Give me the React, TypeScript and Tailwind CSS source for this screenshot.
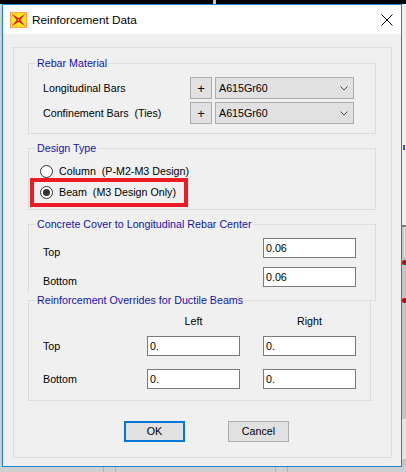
import type { ReactNode } from "react";

function Group({
  title,
  className,
  children,
}: {
  title: string;
  className: string;
  children: ReactNode;
}) {
  return (
    <div className={`relative border border-[#dcdcdc] ${className}`}>
      <span className="absolute -top-[7px] left-[6px] px-[2px] bg-[#f0f0f0] text-[#1414a6] leading-[13px] whitespace-nowrap">
        {title}
      </span>
      {children}
    </div>
  );
}

function Field({ value }: { value: string }) {
  return (
    <input
      readOnly
      value={value}
      className="w-[93px] h-[20px] border border-[#7a7a7a] bg-white px-[2px] text-[10.7px] leading-[13px] text-black outline-none"
    />
  );
}

function MaterialRow({ label }: { label: string }) {
  return (
    <div className="flex items-center h-[22px]">
      <span className="w-[147px] whitespace-pre">{label}</span>
      <button className="w-[22px] h-[22px] border border-[#adadad] bg-[#e1e1e1] flex items-center justify-center text-[13px] leading-none">
        +
      </button>
      <div className="ml-[3px] w-[139px] h-[22px] border border-[#adadad] bg-[#e1e1e1] flex items-center justify-between pl-[3px] pr-[5px]">
        <span>A615Gr60</span>
        <svg width="8" height="5" viewBox="0 0 8 5">
          <path d="M0.5 0.5 L4 4 L7.5 0.5" stroke="#4a4a4a" fill="none" />
        </svg>
      </div>
    </div>
  );
}

function Radio({ label, checked }: { label: string; checked?: boolean }) {
  return (
    <div className="flex items-center h-[21px] gap-[6px]">
      <span className="w-[13px] h-[13px] rounded-full border border-[#333] bg-white flex items-center justify-center">
        {checked && <span className="w-[7px] h-[7px] rounded-full bg-[#333]" />}
      </span>
      <span className="whitespace-pre">{label}</span>
    </div>
  );
}

function AppIcon() {
  return (
    <svg width="17" height="16" viewBox="0 0 17 16">
      <rect x="0.5" y="0.5" width="16" height="15" fill="#ffe81a" stroke="#ff4a1f" strokeDasharray="1 1" />
      <path d="M1.5 1.5 L8.5 6.3 L15.5 1.5 L10.3 8 L15.5 14.5 L8.5 9.7 L1.5 14.5 L6.7 8 Z" fill="#e8141c" />
      <path d="M8.5 6.8 L9.7 8 L8.5 9.2 L7.3 8 Z" fill="#ff9a1a" />
    </svg>
  );
}

export default function App() {
  return (
    <div className="relative w-[406px] h-[472px] overflow-hidden bg-[#d2d2d2] font-['Liberation_Sans',Arial,sans-serif] text-[10.7px] leading-[13px] text-black">
      {/* desktop strip above */}
      <div className="relative h-[4px] bg-black">
        <span className="absolute left-[213px] top-0 w-[3px] h-[4px] bg-[#c8c8c8]" />
      </div>

      <div className="flex">
        <div className="w-[2px] h-[463px] bg-[#ececec]" />

        {/* window */}
        <div className="w-[400px] h-[463px] border border-[#1883d7] bg-[#f0f0f0] flex flex-col shadow-[0_2px_6px_rgba(0,0,0,0.35)]">
          <div className="h-[29px] bg-white flex items-center pl-[7px] pr-[8px]">
            <AppIcon />
            <span className="ml-[5px] text-[11.8px] leading-[14px]">Reinforcement Data</span>
            <svg className="ml-auto" width="12" height="12" viewBox="0 0 12 12">
              <path d="M0.5 0.5 L11.5 11.5 M11.5 0.5 L0.5 11.5" stroke="#000" strokeWidth="1" />
            </svg>
          </div>

          <div className="pl-[10px] pt-[13px]">
            <div className="w-[379px] h-[411px] border border-[#dcdcdc] pl-[14px]">
              <Group title="Rebar Material" className="w-[348px] h-[71px] mt-[15px] pt-[13px] pl-[14px]">
                <div className="flex flex-col gap-[3px]">
                  <MaterialRow label="Longitudinal Bars" />
                  <MaterialRow label="Confinement Bars  (Ties)" />
                </div>
              </Group>

              <Group title="Design Type" className="w-[348px] h-[62px] mt-[14px] pt-[12px] pl-[11px]">
                <Radio label="Column  (P-M2-M3 Design)" />
                <Radio label="Beam  (M3 Design Only)" checked />
                <div className="absolute left-[1px] top-[29px] w-[158px] h-[29px] border-[4px] border-[#ed1c24]" />
              </Group>

              <Group title="Concrete Cover to Longitudinal Rebar Center" className="w-[348px] h-[77px] mt-[14px] pt-[13px] pl-[14px]">
                <div className="flex items-center h-[20px]">
                  <span className="w-[220px] pt-[9px]">Top</span>
                  <Field value="0.06" />
                </div>
                <div className="flex items-center h-[20px] mt-[9px]">
                  <span className="w-[220px] pt-[9px]">Bottom</span>
                  <Field value="0.06" />
                </div>
              </Group>

              <div className="relative z-10 w-[343px] h-[101px] -mt-[1px] border border-[#dcdcdc] bg-[#f0f0f0] pt-[14px] pl-[14px]">
                <div className="absolute -top-[8px] -left-[1px] -right-[1px] h-[7px] bg-[#f0f0f0]" />
                <span className="absolute -top-[7px] left-[6px] px-[2px] bg-[#f0f0f0] text-[#1414a6] leading-[13px] whitespace-nowrap">
                  Reinforcement Overrides for Ductile Beams
                </span>
                <div className="flex h-[13px]">
                  <span className="w-[104px]" />
                  <span className="w-[93px] text-center">Left</span>
                  <span className="ml-[23px] w-[93px] text-center">Right</span>
                </div>
                <div className="flex items-center h-[20px] mt-[8px]">
                  <span className="w-[104px]">Top</span>
                  <Field value="0." />
                  <span className="w-[23px]" />
                  <Field value="0." />
                </div>
                <div className="flex items-center h-[20px] mt-[13px]">
                  <span className="w-[104px]">Bottom</span>
                  <Field value="0." />
                  <span className="w-[23px]" />
                  <Field value="0." />
                </div>
              </div>

              <div className="flex mt-[20px] pl-[96px] gap-[43px]">
                <button className="w-[61px] h-[21px] border-2 border-[#0078d7] bg-[#e1e1e1] flex items-center justify-center">
                  OK
                </button>
                <button className="w-[61px] h-[21px] border border-[#adadad] bg-[#e1e1e1] flex items-center justify-center">
                  Cancel
                </button>
              </div>
            </div>
          </div>
        </div>

        {/* background app visible at right edge */}
        <div className="relative w-[4px] h-[463px] bg-[#f0f0f0]">
          <span className="absolute left-[1px] top-[141px] w-[2px] h-[5px] border border-[#3355cc]" />
          <span className="absolute left-0 top-[221px] w-[4px] h-[2px] bg-[#7c7c7c]" />
          <span className="absolute left-0 top-[223px] w-[4px] h-[240px] bg-[#c6c6c6]" />
          <span className="absolute left-[2px] top-[223px] w-[1px] h-[30px] bg-[#e8e8e8]" />
          <span className="absolute left-0 top-[256px] w-[5px] h-[5px] rounded-full bg-[#cc0000]" />
          <span className="absolute left-0 top-[294px] w-[5px] h-[5px] rounded-full bg-[#cc0000]" />
          <span className="absolute left-0 top-[415px] w-[4px] h-[40px] bg-[#e4e4e4]" />
        </div>
      </div>

      {/* desktop below window */}
      <div className="relative h-[5px] bg-[#cfcfcf]">
        <span className="absolute left-[103px] top-0 w-[1px] h-[5px] bg-[#b4b4b4]" />
        <span className="absolute left-[115px] top-0 w-[1px] h-[5px] bg-[#b4b4b4]" />
        <span className="absolute left-[275px] top-0 w-[1px] h-[5px] bg-[#b4b4b4]" />
        <span className="absolute left-[287px] top-0 w-[1px] h-[5px] bg-[#b4b4b4]" />
      </div>
    </div>
  );
}
